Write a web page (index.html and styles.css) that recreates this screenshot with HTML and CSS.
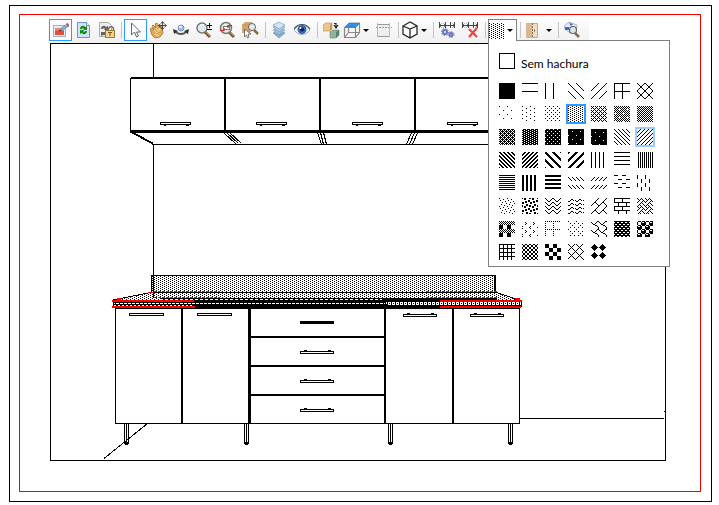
FILE: index.html
```html
<!DOCTYPE html>
<html lang="pt-BR">
  <head>
    <meta charset="UTF-8" />
    <meta name="viewport" content="width=device-width, initial-scale=1.0" />
    <title>Vista frontal</title>
    <link rel="stylesheet" href="styles.css">
  </head>
  <body>
    <main class="sheet">
      <div class="margin-frame">
        <div class="toolbar" role="toolbar" aria-label="Ferramentas">
          <button class="tool active" aria-label="Editar">
            <svg viewBox="0 0 18 18">
              <rect x="1.5" y="4.5" width="12" height="11" fill="#e4ecfa" stroke="#a3b0cc" />
              <path d="M3 7h8l1 1v5H3z" fill="#f0866f" />
              <path d="M3 10l5-1 4 1v4H3z" fill="#e64d3b" />
              <path d="M8 10l1-3 6-4 2 2-6 4z" fill="#7db2de" stroke="#5b8bc0" stroke-width=".6" />
              <path d="M14 3l1-1 2 1v2l-1 1z" fill="#d65a4b" />
              <path d="M7 11l1-3 2 2z" fill="#6c4a3a" />
            </svg>
          </button>
          <button class="tool" aria-label="Atualizar">
            <svg viewBox="0 0 18 18">
              <path d="M2.500 1.500h9l3 3v12h-12z" fill="#d5e3fa" stroke="#7293c9" />
              <path d="M11.500 1.500v3h3" fill="#fff" stroke="#7293c9" />
              <path d="M5 8c0-4 4-4 5-2l2-1v4H8l1-1C8 7 7 7 7 8zM12 10c0 4-4 4-5 2l-2 1V9h4l-1 1c1 1 2 1 2 0z" fill="#149018" />
            </svg>
          </button>
          <button class="tool" aria-label="Bloquear">
            <svg viewBox="0 0 18 18">
              <path d="M1.500 1.500h9l3 3v11h-12z" fill="#eee" stroke="#aaa" />
              <path d="M3 8c0-4 4-4 5-2l2-1v4H6l1-1C6 7 5 7 5 8zM8 10v4H5l-2 1v-4h4z" fill="#666" />
              <path d="M10.500 10V8c0-3 5-3 5 0v2" fill="none" stroke="#777" stroke-width="1.500" />
              <rect x="7.500" y="9.500" width="9" height="7" fill="#f5d583" stroke="#9b7b37" />
              <path d="M10 11h4v1h-1.500v3h-1v-3H10z" fill="#765a24" />
            </svg>
          </button>
          <span class="separator"></span>
          <button class="tool active" aria-label="Selecionar">
            <svg viewBox="0 0 18 18">
              <path d="M4.500 2v12l3-3 2 5 2-1-2-4h4z" fill="#fff" stroke="#666" />
            </svg>
          </button>
          <button class="tool" aria-label="Mover">
            <svg viewBox="0 0 18 18">
              <path d="M0 8l2-1 2 2-2-4 1-1 3 3-1-4 2-1 3 5V5l2 1 1 6-3 4-5 1-3-3z" fill="#e2aa55" stroke="#9d7038" stroke-width=".8" />
              <path d="M4 9l3 3M6 7l3 4M9 7l1 3M5 13l4 2" stroke="#ffe0a0" />
              <path d="M12.500 1v7M9 4.500h7M11 2.500l1.500-2 1.500 2M11 6.500l1.500 2 1.500-2M10.500 3l-2 1.500 2 1.500M14.500 3l2 1.500-2 1.500" fill="none" stroke="#333" stroke-width=".9" />
            </svg>
          </button>
          <button class="tool" aria-label="Orbitar">
            <svg viewBox="0 0 18 18">
              <circle cx="8" cy="7" r="3" fill="#9db7de" stroke="#7c98c4" />
              <circle cx="7.500" cy="6" r="1.300" fill="#fff" />
              <path d="M2 10c3 4 9 4 12 0" fill="none" stroke="#555" stroke-width="2" />
              <path d="M0 8l1 5 4-3zM16 8l-1 5-4-3z" fill="#333" />
            </svg>
          </button>
          <button class="tool" aria-label="Zoom">
            <svg viewBox="0 0 18 18">
              <path d="M9 11l5 5" stroke="#765b37" stroke-width="3" />
              <path d="M10 11l4 4" stroke="#c4a064" />
              <circle cx="6" cy="7" r="5" fill="#dce9ed" stroke="#777" stroke-width="1.500" />
              <path d="M3 6c1-2 3-3 5-2" fill="none" stroke="#fff" />
              <path d="M11 4.500h5M13.500 2v5M11 8.500h5" stroke="#111" />
            </svg>
          </button>
          <button class="tool" aria-label="Zoom na janela">
            <svg viewBox="0 0 18 18">
              <path d="M10 11l5 5" stroke="#765b37" stroke-width="3" />
              <path d="M11 11l4 4" stroke="#c4a064" />
              <circle cx="7" cy="7" r="5.500" fill="#e8eeee" stroke="#777" stroke-width="1.500" />
              <rect x="4.500" y="5.500" width="6" height="3" fill="#fff" stroke="#777" />
              <path d="M1 9.500h4V7M13 4.500H9V7" fill="none" stroke="#d52424" stroke-width="1.200" />
            </svg>
          </button>
          <button class="tool" aria-label="Zoom no objeto">
            <svg viewBox="0 0 18 18">
              <path d="M0 4l3-3h7v9l-3 2H0z" fill="#d7a66d" />
              <path d="M0 4h7v8M7 4l3-3" fill="none" stroke="#b78a55" stroke-width=".7" />
              <path d="M12 9l4 4" stroke="#8b6c42" stroke-width="2.500" />
              <circle cx="10" cy="6" r="3.500" fill="#e9edf0" stroke="#666" />
              <path d="M2.500 8v8l2-2 1 3 1.500-1-1-3h3z" fill="#fff" stroke="#555" stroke-width=".8" />
            </svg>
          </button>
          <span class="separator"></span>
          <button class="tool" aria-label="Camadas">
            <svg viewBox="0 0 18 18">
              <g stroke="#7b9cbe" stroke-width=".7">
                <path d="M2 12l6-3 6 3-6 5z" fill="#86a9cf" />
                <path d="M2 9l6-3 6 3-6 5z" fill="#9fbddc" />
                <path d="M2 6l6-3 6 3-6 5z" fill="#b5cde6" />
                <path d="M2 4l6-3 6 3-6 4z" fill="#d6e5f3" />
              </g>
            </svg>
          </button>
          <button class="tool" aria-label="Visualizar">
            <svg viewBox="0 0 18 18">
              <path d="M0 9c4-6 12-6 16 0-4 6-12 6-16 0z" fill="#f4f7fb" stroke="#999" stroke-width=".8" />
              <circle cx="8" cy="8.500" r="4.500" fill="#3366bd" />
              <circle cx="8" cy="8.500" r="2" fill="#101c48" />
              <circle cx="6.500" cy="7" r="1" fill="#fff" />
              <path d="M0 8c4-6 12-6 16 0" fill="none" stroke="#454b58" stroke-width="1.200" />
            </svg>
          </button>
          <span class="separator"></span>
          <button class="tool" aria-label="Substituir">
            <svg viewBox="0 0 18 18">
              <path d="M0 4l3-2h6v6l-2 2H0z" fill="#edc48c" stroke="#c09560" stroke-width=".7" />
              <path d="M7 4l2-2v6l-2 2z" fill="#c99555" />
              <path d="M7 11l3-2h6v5l-3 3H7z" fill="#8fb49b" stroke="#6d9b80" stroke-width=".7" />
              <path d="M13 11l3-2v5l-3 3z" fill="#568469" />
              <path d="M11 2.500h2v3M11 4l2 3 2-3" fill="none" stroke="#222" stroke-width="1.200" />
            </svg>
          </button>
          <button class="tool dropdown-toggle" aria-label="Vista">
            <svg viewBox="0 0 18 18">
              <path d="M1.500 6.500h11v10h-11zM5.500 2.500h11v9l-4 5M1.500 16.500l4-5h11M5.500 6v5" fill="none" stroke="#888" stroke-width="1.200" />
              <path d="M2 6l4-4h11l-4 4z" fill="#2796ee" stroke="#4d6b89" stroke-width=".7" />
            </svg>
          </button>
          <button class="tool" aria-label="Corte" disabled>
            <svg viewBox="0 0 18 18">
              <rect x="2.500" y="3.500" width="12" height="12" fill="#eee" stroke="#999" />
              <path d="M1 6.500h16" stroke="#999" stroke-dasharray="2 1" />
              <path d="M2.500 2v14M14.500 2v14" stroke="#bbb" />
            </svg>
          </button>
          <span class="separator"></span>
          <button class="tool dropdown-toggle" aria-label="Perspectiva">
            <svg viewBox="0 0 18 18">
              <path d="M2 5l7-4 7 4v8l-7 4-7-4zM2 5l7 3 7-3M9 8v9" fill="#fff" stroke="#292929" stroke-width="1.300" />
            </svg>
          </button>
          <span class="separator"></span>
          <button class="tool" aria-label="Configurar cotas">
            <svg viewBox="0 0 18 18">
              <path d="M.5 1v6M6.500 1v6M11.500 1v6M15.500 1v6M0 4.500h16" stroke="#444" />
              <path d="M2.500 2.500l-2 2 2 2M4.500 2.500l2 2-2 2M13.500 2.500l2 2-2 2" fill="none" stroke="#444" stroke-width=".7" />
              <g fill="none" stroke="#6775bd">
                <circle cx="6" cy="11" r="2" stroke-width="2" />
                <circle cx="6" cy="11" r="3.500" stroke-dasharray="1.500 1.200" />
                <circle cx="12" cy="13.500" r="1.500" stroke-width="2" />
                <circle cx="12" cy="13.500" r="3" stroke-dasharray="1.500 1.200" />
              </g>
            </svg>
          </button>
          <button class="tool" aria-label="Excluir cotas">
            <svg viewBox="0 0 18 18">
              <path d="M.5 1v6M6.500 1v6M11.500 1v6M15.500 1v6M0 4.500h16" stroke="#444" />
              <path d="M2.500 2.500l-2 2 2 2M4.500 2.500l2 2-2 2M13.500 2.500l2 2-2 2" fill="none" stroke="#444" stroke-width=".7" />
              <path d="M7 8l8 8M15 7l-8 9" stroke="#f04143" stroke-width="2.200" />
            </svg>
          </button>
          <span class="separator"></span>
          <div class="dropdown">
            <button class="tool dropdown-toggle open" id="hatch-btn" aria-label="Hachura" aria-expanded="true"></button>
            <div class="dropdown-content" id="hatch-menu">
              <button class="no-hatch"><span class="empty-swatch"></span>Sem hachura</button>
              <div class="swatches" id="swatches"></div>
            </div>
          </div>
          <span class="separator"></span>
          <button class="tool dropdown-toggle door" aria-label="Portas">
            <svg viewBox="0 0 18 18">
              <path d="M3.500 2.500h11v14h-11z" fill="#f3dcc0" stroke="#c9ab88" />
              <path d="M3 2l6 1v14H3z" fill="#d9b78f" />
              <path d="M9.500 2v15" stroke="#8c7055" stroke-dasharray="2 1" />
              <path d="M11 9.500h1" stroke="#666" stroke-width="2" />
            </svg>
          </button>
          <span class="separator"></span>
          <button class="tool" aria-label="Localizar">
            <svg viewBox="0 0 18 18">
              <path d="M0 5l5-4 8 3-1 7-6 1-5-4z" fill="#e4ebf4" stroke="#9daabd" stroke-width=".8" />
              <path d="M1 6h4v3H1zM5 2l4 1-2 2z" fill="#4269bd" />
              <path d="M11 12l4 4" stroke="#806b55" stroke-width="2.500" />
              <circle cx="9" cy="9" r="3.500" fill="#dce6e9" stroke="#666" stroke-width="1.200" />
            </svg>
          </button>
        </div>

        <svg class="drawing" viewBox="50 43 616 418" role="img" aria-label="Cozinha, vista frontal">
          <defs>
            <pattern id="dots" width="4" height="4" patternUnits="userSpaceOnUse">
              <path d="M0 0h1v1H0zM2 1h1v1H2zM0 2h1v1H0zM2 3h1v1H2z" />
            </pattern>
            <pattern id="granite" width="4" height="6" patternUnits="userSpaceOnUse">
              <path d="M0 0h4v6H0z" />
              <path d="M0 3h3v1H0zM2 5h3v1H2z" fill="#fff" />
            </pattern>
            <pattern id="chain" width="4" height="6" patternUnits="userSpaceOnUse">
              <path d="M0 0h4v6H0z" />
              <path d="M0 2h3v1H0zM0 3h1v2H0zM2 3h1v2H2zM0 4h3v1H0z" fill="#fff" />
            </pattern>
            <g id="handle-top">
              <rect x=".5" y="1.500" width="33" height="2" />
              <path d="M4 .5h3M28 .5h3" />
            </g>
            <g id="handle-upper">
              <rect x=".5" y=".5" width="30" height="2" />
              <path d="M4 3.500h2M26 3.500h3" />
            </g>
            <g id="leg">
              <path d="M.5 0v21M2.500 0v22M4.500 0v21M0 19.500h5M0 20.500h5M1 21.500h3" />
            </g>
          </defs>

          <rect class="line" x="50.500" y="43.500" width="615" height="417" />

          <!-- walls and floor -->
          <path class="line" d="M153.500 43v34M153.500 144v131M153 144.500h343M147.500 423.500L104 458.500M520 418.500h144M664 411.500h2" />

          <!-- wall cabinets -->
          <g class="line">
            <path d="M130.500 78v54M131.500 132.500l22 12M133.500 132.500l20 11" />
            <path d="M223.500 132.500l13 12M226.500 132.500l12 11M229.500 132.500l12 11M317.500 132.500l4 12M320.500 132.500l3 12M323.500 132.500l3 12M411.500 132.500l-5 12M414.500 132.500l-5 12M417.500 132.500l-5 12" />
          </g>
          <path class="edge" d="M131 78h365M225 78v53M320 78v53M415 78v53" />
          <path class="thick" d="M130 131.500h366" />
          <g class="line">
            <use href="#handle-upper" x="160" y="122" />
            <use href="#handle-upper" x="256" y="122" />
            <use href="#handle-upper" x="352" y="122" />
            <use href="#handle-upper" x="447" y="122" />
          </g>

          <!-- base cabinets -->
          <path class="line" d="M115.500 308v115.500h404V308" />
          <path class="edge" d="M115 308h405M182 308v115M385 308v115M453 308v115M250 337h135M250 366h135M250 395h135" />
          <path class="thick" d="M249.500 308v116" />
          <g class="line">
            <rect x="129.500" y="313.500" width="34" height="2" />
            <rect x="197.500" y="313.500" width="34" height="2" />
            <use href="#handle-top" x="403" y="313" />
            <use href="#handle-top" x="470" y="313" />
            <use href="#handle-top" x="300" y="350" />
            <use href="#handle-top" x="300" y="379" />
            <use href="#handle-top" x="300" y="408" />
            <use href="#leg" x="124" y="423" />
            <use href="#leg" x="244" y="423" />
            <use href="#leg" x="388" y="423" />
            <use href="#leg" x="508" y="423" />
          </g>
          <path class="thick" d="M300 322.500h34" />

          <!-- backsplash and worktop -->
          <rect x="151" y="275" width="345" height="23" fill="url(#dots)" />
          <path d="M151 293L113 300h408l-25-7z" fill="url(#dots)" />
          <path d="M160 298h337v3H160z" />
          <path d="M113 301h273v6H113z" fill="url(#granite)" />
          <path d="M386 301h135v6H386z" fill="url(#chain)" />
          <path d="M194 305h246v3H194zM194 300h190v1H194z" />
          <path d="M160 299.500h222" stroke="#fff" stroke-dasharray="3 2" />
          <path class="line" d="M151 275.500h345M153 292.500h343M151.500 275v17M495.500 275v17M151 292.500L113 300M496 292.500l25 8" />
          <path class="line" d="M153.500 276v22M494.500 276v18" />
          <path class="line" d="M113.500 300v7M521.500 300v7M266 301.500l-6 4M382 300.500l6 5" />
          <path class="red edge" d="M112 301h82M112 307h83M440 301h82M440 307h81M117 299h4M515 299h5" />
          <path class="red line" d="M154 291.500h66M154 297.500h66M426 291.500h71M426 297.500h71" stroke-dasharray="3 1" />
          <path class="red line" d="M148 292.500h6" />
        </svg>
      </div>
    </main>

    <script>
      // 8x8 hatch bitmaps, one byte per row
      const hatches = [
        ["Sólido", "ffffffffffffffff"],
        ["Horizontal", "ff00000000000000"],
        ["Vertical", "8080808080808080"],
        ["Diagonal descendente", "M-1 -1L17 17M7 -1L17 9M-1 7L9 17"],
        ["Diagonal ascendente", "M17 -1L-1 17M9 -1L-1 9M17 7L7 17"],
        ["Cruz", "ff80808080808080"],
        ["Cruz diagonal", "M-1 -1L17 17M7 -1L17 9M-1 7L9 17M17 -1L-1 17M9 -1L-1 9M17 7L7 17"],
        ["5%", "8000000008000000"],
        ["10%", "8000080080000800"],
        ["20%", "8800220088002200"],
        ["25%", "8822882288228822"],
        ["30%", "aa44aa11aa44aa11"],
        ["40%", "aa55aa51aa55aa15"],
        ["50%", "aa55aa55aa55aa55"],
        ["60%", "ee55bb55ee55bb55"],
        ["70%", "77dd77dd77dd77dd"],
        ["75%", "77ffddff77ffddff"],
        ["80%", "fffff7ffffff7fff"],
        ["90%", "fffffff7ffffff7f"],
        ["Descendente clara", "8844221188442211"],
        ["Ascendente clara", "1122448811224488"],
        ["Descendente escura", "cc663399cc663399"],
        ["Ascendente escura", "3366cc993366cc99"],
        ["Descendente larga", "c1e070381c0e0783"],
        ["Ascendente larga", "c183070e1c3870e0"],
        ["Vertical clara", "8888888888888888"],
        ["Horizontal clara", "ff000000ff000000"],
        ["Vertical estreita", "5555555555555555"],
        ["Horizontal estreita", "ff00ff00ff00ff00"],
        ["Vertical escura", "cccccccccccccccc"],
        ["Horizontal escura", "ffff0000ffff0000"],
        ["Descendente tracejada", "0000884422110000"],
        ["Ascendente tracejada", "0000112244880000"],
        ["Horizontal tracejada", "f00000000f000000"],
        ["Vertical tracejada", "8080808008080808"],
        ["Confete pequeno", "8008400210012004"],
        ["Confete grande", "b130031bd8c00c8d"],
        ["Zigue-zague", "8142241881422418"],
        ["Onda", "001825c0001825c0"],
        ["Tijolo diagonal", "0102040818244281"],
        ["Tijolo horizontal", "ff808080ff080808"],
        ["Trama", "8854224588142251"],
        ["Xadrez escocês", "aa55aa55f0f0f0f0"],
        ["Torrão", "0010081000800180"],
        ["Grade pontilhada", "aa00800080008000"],
        ["Losango pontilhado", "8000220008002200"],
        ["Telha", "038448300c020101"],
        ["Treliça", "ff66ff99ff66ff99"],
        ["Esfera", "77898f8f7798f8f8"],
        ["Grade pequena", "ff888888ff888888"],
        ["Xadrez pequeno", "9966669999666699"],
        ["Xadrez grande", "f0f0f0f00f0f0f0f"],
        ["Losango contornado", "8244281028448201"],
        ["Losango sólido", "10387cfe7c381000"]
      ];

      function hatchPath(hex) {
        let d = "";
        for (let y = 0; y < 16; y++) {
          const row = parseInt(hex.substr((y % 8) * 2, 2), 16);
          for (let x = 0; x < 16; x++) {
            if (row & (128 >> (x % 8))) {
              d += `M${x} ${y}h1v1h-1z`;
            }
          }
        }
        return d;
      }

      function hatchSvg(data) {
        if (data[0] === "M") {
          return `<svg viewBox="0 0 16 16"><path class="diagonal" d="${data}"/></svg>`;
        }
        return `<svg viewBox="0 0 16 16"><path class="pixels" d="${hatchPath(data)}"/></svg>`;
      }

      const swatches = document.getElementById("swatches");
      const hatchBtn = document.getElementById("hatch-btn");
      const hatchMenu = document.getElementById("hatch-menu");

      hatches.forEach(([name, data]) => {
        const btn = document.createElement("button");
        btn.className = "swatch";
        btn.setAttribute("aria-label", name);
        btn.innerHTML = hatchSvg(data);
        if (name === "25%") btn.classList.add("selected");
        if (name === "Ascendente clara") btn.classList.add("hover");

        btn.addEventListener("click", () => {
          document.querySelector(".swatch.selected").classList.remove("selected");
          btn.classList.add("selected");
          hatchBtn.innerHTML = hatchSvg(data);
        });
        swatches.appendChild(btn);
      });

      hatchBtn.innerHTML = hatchSvg("8822882288228822");
      hatchBtn.addEventListener("click", () => {
        hatchMenu.hidden = !hatchMenu.hidden;
        hatchBtn.classList.toggle("open");
        hatchBtn.setAttribute("aria-expanded", !hatchMenu.hidden);
      });
    </script>
  </body>
</html>
```
FILE: styles.css
```css
* {
  margin: 0;
  padding: 0;
  box-sizing: border-box;
}

body {
  background-color: white;
  font-family: Lato, "Open Sans", sans-serif;
  font-size: 12px;
  color: black;
}

button {
  border: none;
  background: none;
  font: inherit;
  color: inherit;
}

.sheet {
  margin: 5px 7px 3px 9px;
  padding: 8px 10px 9px 9px;
  border: 1px solid black;
}

.margin-frame {
  padding: 0 34px 30px 28px;
  border: 1px solid red;
}

/* Toolbar */
.toolbar {
  display: flex;
  width: fit-content;
  padding: 4px 5px 2px 1px;
  background: linear-gradient(white, #f0f0f0);
}

.tool {
  display: flex;
  flex: none;
  align-items: center;
  justify-content: center;
  width: 23px;
  height: 22px;
}

.tool svg {
  width: 18px;
  height: 18px;
}

.tool.active {
  border: 1px solid #3399ff;
  background-color: #fafcff;
}

.separator {
  width: 6px;
  height: 16px;
  margin-top: 3px;
  background: linear-gradient(#c5c5c5, #c5c5c5) center / 1px 100% no-repeat;
}

.tool.dropdown-toggle {
  width: 29px;
  justify-content: space-between;
  padding: 0 3px 0 0;
}

.tool.door {
  width: 32px;
}

.dropdown-toggle::after {
  content: "";
  border: 3px solid transparent;
  border-top-color: black;
  border-bottom: none;
}

/* Hatch menu */
.dropdown {
  position: relative;
}

.tool.open {
  position: relative;
  z-index: 2;
  border: 1px solid #808080;
  border-bottom: none;
  background-color: white;
}

.tool.open svg {
  width: 16px;
  height: 16px;
}

.dropdown-content {
  position: absolute;
  top: 21px;
  left: 0;
  z-index: 1;
  width: 182px;
  padding: 12px 10px 6px;
  border: 1px solid #808080;
  background-color: white;
}

.dropdown-content[hidden] {
  display: none;
}

.no-hatch {
  display: flex;
  align-items: flex-start;
  gap: 6px;
  height: 18px;
  margin-bottom: 12px;
  line-height: 21px;
}

.empty-swatch {
  width: 16px;
  height: 16px;
  border: 1px solid black;
}

.swatches {
  display: grid;
  grid-template-columns: repeat(7, 16px);
  gap: 7px;
}

.swatch {
  height: 16px;
}

.swatch svg {
  display: block;
  width: 16px;
  height: 16px;
}

.swatch.selected {
  outline: 2px solid #3399ff;
}

.swatch.hover,
.swatch:hover {
  outline: 2px solid #99ccff;
}

.pixels {
  fill: black;
  shape-rendering: crispEdges;
}

.diagonal {
  fill: none;
  stroke: black;
  stroke-width: 1px;
}

/* Drawing */
.drawing {
  display: block;
  width: calc(100% - 2px);
  margin-left: 2px;
  shape-rendering: crispEdges;
}

.line,
.edge,
.thick {
  fill: none;
  stroke: black;
  stroke-width: 1px;
}

.edge {
  stroke-width: 2px;
}

.thick {
  stroke-width: 3px;
}

.red {
  stroke: red;
}
```
